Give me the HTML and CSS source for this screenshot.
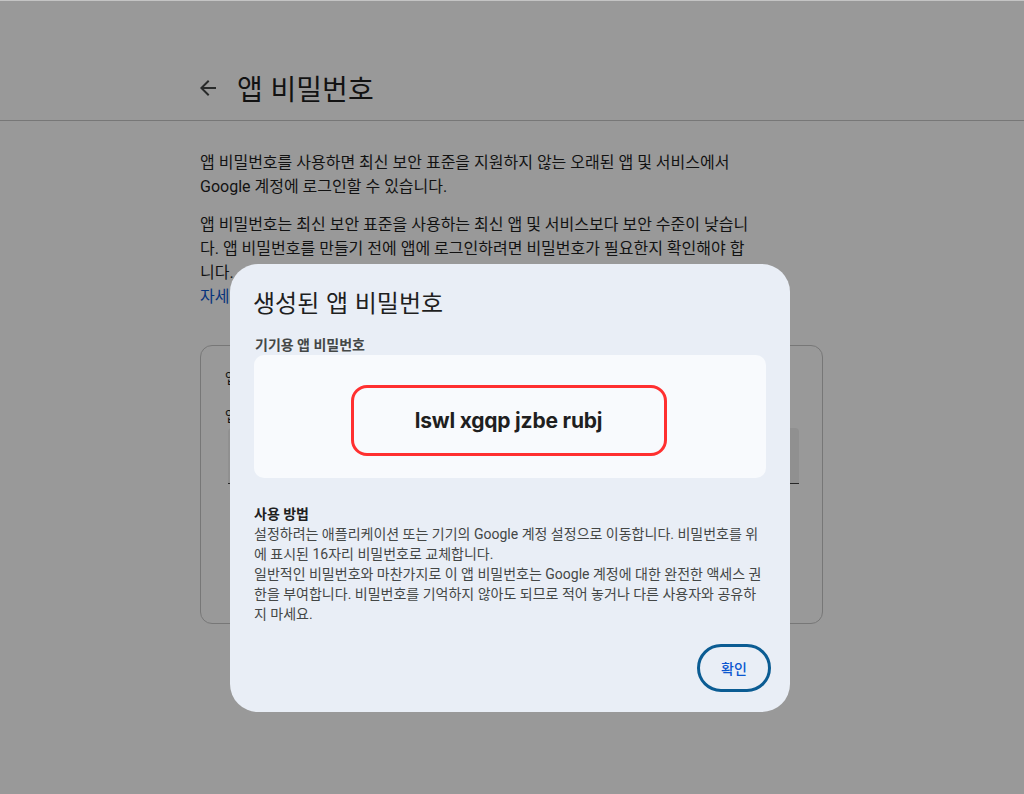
FILE: index.html
```html
<!DOCTYPE html>
<html lang="ko">
<head>
<meta charset="utf-8">
<title>앱 비밀번호</title>
<link rel="stylesheet" href="styles.css">
</head>
<body>
<div class="page">
  <header class="header">
    <div class="header-inner">
      <svg class="back" width="24" height="24" viewBox="0 0 24 24"><path d="M20 11H7.83l5.59-5.59L12 4l-8 8 8 8 1.41-1.41L7.83 13H20v-2z" fill="#444746"/></svg>
      <h1 class="title">앱 비밀번호</h1>
    </div>
  </header>
  <main class="content">
    <p class="para">앱 비밀번호를 사용하면 최신 보안 표준을 지원하지 않는 오래된 앱 및 서비스에서 Google 계정에 로그인할 수 있습니다.</p>
    <p class="para">앱 비밀번호는 최신 보안 표준을 사용하는 최신 앱 및 서비스보다 보안 수준이 낮습니다. 앱 비밀번호를 만들기 전에 앱에 로그인하려면 비밀번호가 필요한지 확인해야 합니다.<br><a class="link">자세히</a></p>
    <section class="card">
      <div class="card-text">앱 비밀번호를 만들려면 앱 이름을 입력하세요.</div>
      <div class="card-label">앱 이름</div>
      <div class="field"></div>
    </section>
  </main>
</div>
<div class="overlay"></div>
<div class="dialog">
  <h2 class="dlg-title">생성된 앱 비밀번호</h2>
  <div class="dlg-label">기기용 앱 비밀번호</div>
  <div class="pw-box">
    <div class="pw-ring">lswl xgqp jzbe rubj</div>
  </div>
  <div class="howto">
    <div class="howto-title">사용 방법</div>
    <p class="howto-text">설정하려는 애플리케이션 또는 기기의 Google 계정 설정으로 이동합니다. 비밀번호를 위에 표시된 16자리 비밀번호로 교체합니다.</p>
    <p class="howto-text">일반적인 비밀번호와 마찬가지로 이 앱 비밀번호는 Google 계정에 대한 완전한 액세스 권한을 부여합니다. 비밀번호를 기억하지 않아도 되므로 적어 놓거나 다른 사용자와 공유하지 마세요.</p>
  </div>
  <div class="actions">
    <button class="ok">확인</button>
  </div>
</div>
</body>
</html>
```

FILE: styles.css
```css
html, body {
  margin: 0;
  padding: 0;
}
body {
  width: 1024px;
  height: 794px;
  overflow: hidden;
  background: #ffffff;
  font-family: Roboto, "Noto Sans CJK KR", sans-serif;
  color: #1f1f1f;
  position: relative;
  border-top: 1px solid #c4c4c4;
  box-sizing: border-box;
}
.header {
  height: 119px;
  border-bottom: 1px solid #c7c7c7;
  display: flex;
  align-items: flex-end;
}
.header-inner {
  display: flex;
  align-items: center;
  padding-left: 196px;
  padding-bottom: 12px;
  gap: 17px;
}
.back {
  display: block;
}
.title {
  margin: 0;
  font-size: 28px;
  font-weight: 400;
  line-height: 40px;
  font-family: "Noto Sans CJK KR", sans-serif;
  color: #1f1f1f;
}
.content {
  padding-left: 200px;
  padding-top: 30px;
}
.para {
  width: 556px;
  margin: 0 0 14px 0;
  font-size: 16px;
  line-height: 24px;
  color: #1f1f1f;
}
.link {
  color: #0b57d0;
}
.card {
  margin-top: 36px;
  width: 623px;
  height: 279px;
  border: 1px solid #c7c7c7;
  border-radius: 12px;
  padding: 22px 24px 0 24px;
  box-sizing: border-box;
}
.card-text, .card-label {
  font-size: 14px;
  line-height: 20px;
  color: #1f1f1f;
}
.card-label {
  margin-top: 18px;
}
.field {
  margin-top: 2px;
  margin-left: 3px;
  width: 571px;
  height: 55px;
  background: #f0f0f0;
  border-radius: 4px 4px 0 0;
  border-bottom: 1px solid #444;
}
.overlay {
  position: absolute;
  inset: 0;
  background: rgba(0, 0, 0, 0.4);
}
.dialog {
  position: absolute;
  left: 230px;
  top: 263px;
  width: 560px;
  height: 448px;
  box-sizing: border-box;
  background: #e9eef6;
  border-radius: 28px;
  padding: 22px 24px 20px 24px;
  display: flex;
  flex-direction: column;
}
.dlg-title {
  margin: 0 0 0 -1px;
  font-size: 24px;
  font-weight: 400;
  line-height: 32px;
  font-family: "Noto Sans CJK KR", sans-serif;
  color: #1f1f1f;
}
.dlg-label {
  margin-top: 17px;
  margin-left: 1px;
  font-size: 14px;
  font-weight: 700;
  line-height: 20px;
  color: #444746;
}
.pw-box {
  margin-top: 0;
  height: 123px;
  box-sizing: border-box;
  padding-top: 7px;
  background: #f8fafd;
  border-radius: 10px;
  display: flex;
  align-items: center;
  justify-content: center;
}
.pw-ring {
  width: 316px;
  height: 71px;
  margin-right: 3px;
  box-sizing: border-box;
  border: 3px solid #ff3030;
  border-radius: 16px;
  display: flex;
  align-items: center;
  justify-content: center;
  font-family: Inter, sans-serif;
  font-weight: 700;
  font-size: 21px;
  letter-spacing: -0.2px;
  color: #1f1f1f;
}
.howto {
  margin-top: 26px;
}
.howto-title {
  font-size: 14px;
  font-weight: 700;
  line-height: 20px;
  color: #1f1f1f;
}
.howto-text {
  margin: 0;
  font-size: 14px;
  line-height: 20px;
  color: #444746;
}
.actions {
  margin-top: auto;
  display: flex;
  justify-content: flex-end;
}
.ok {
  width: 74px;
  height: 48px;
  margin-right: -5px;
  border: 3px solid #0b5c93;
  border-radius: 24px;
  background: transparent;
  font-family: Roboto, "Noto Sans CJK KR", sans-serif;
  font-size: 14px;
  font-weight: 500;
  color: #0b57d0;
}
```
